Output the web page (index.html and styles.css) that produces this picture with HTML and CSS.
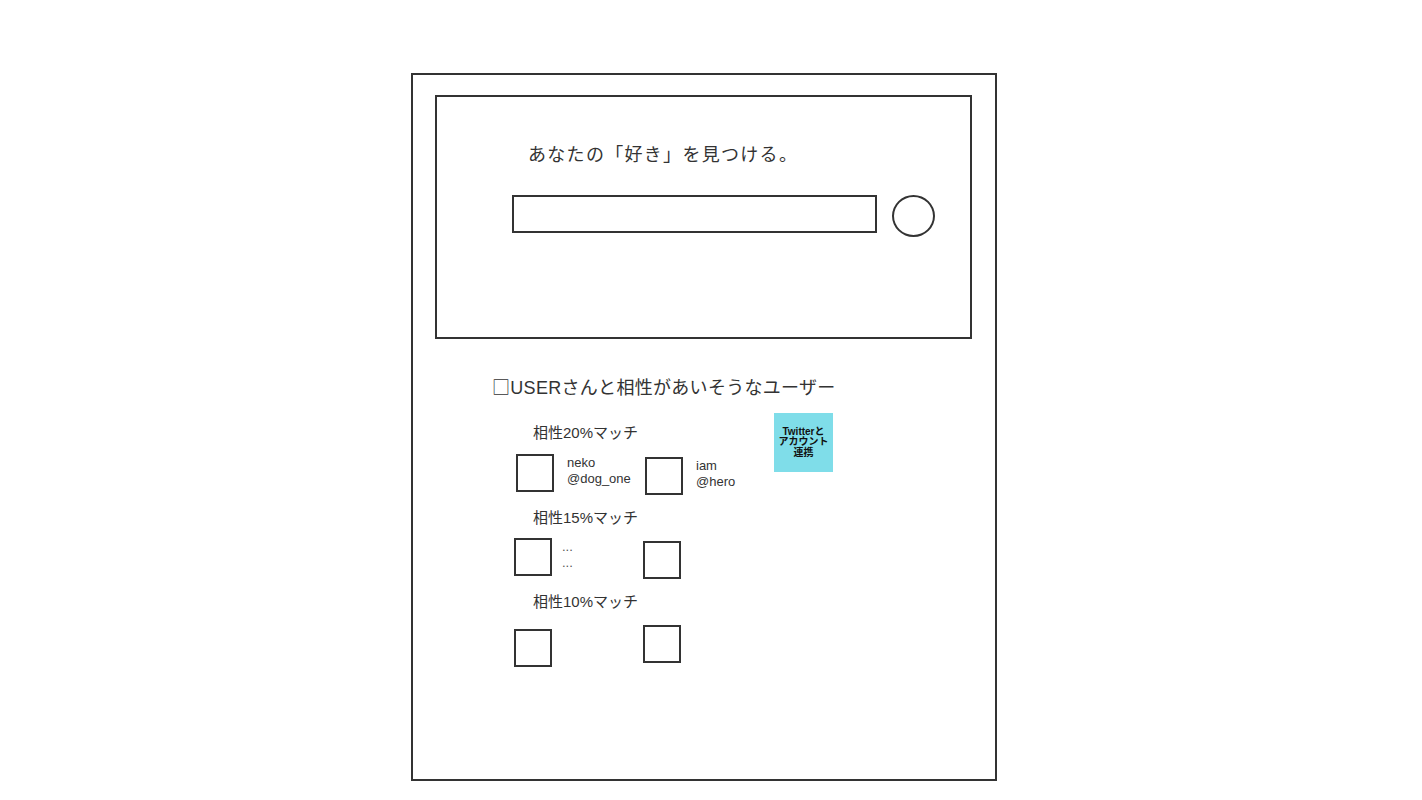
FILE: index.html
```html
<!DOCTYPE html>
<html lang="ja">

<head>
    <meta charset="UTF-8" />
    <meta name="viewport" content="width=device-width, initial-scale=1" />
    <title>好きを見つける</title>
    <link rel="stylesheet" href="styles.css">
</head>

<body>
    <div class="frame">
        <div class="hero">
            <h1 class="hero-title">あなたの「好き」を見つける。</h1>
            <form class="search">
                <input type="text" class="search-input" />
                <button type="submit" class="search-btn"></button>
            </form>
        </div>

        <h2 class="suggest-title"><span class="box-mark">□</span>USERさんと相性があいそうなユーザー</h2>

        <div class="suggest-body">
            <div class="matches">
                <div class="match-group">
                    <div class="match-label">相性20%マッチ</div>
                    <div class="user-row user-row--first">
                        <div class="user">
                            <div class="avatar"></div>
                            <div class="user-text">neko<br>@dog_one</div>
                        </div>
                        <div class="user user--low">
                            <div class="avatar"></div>
                            <div class="user-text">iam<br>@hero</div>
                        </div>
                    </div>
                </div>

                <div class="match-group">
                    <div class="match-label">相性15%マッチ</div>
                    <div class="user-row">
                        <div class="user">
                            <div class="avatar"></div>
                            <div class="user-text user-text--dots">...<br>...</div>
                        </div>
                        <div class="user user--low">
                            <div class="avatar"></div>
                        </div>
                    </div>
                </div>

                <div class="match-group">
                    <div class="match-label">相性10%マッチ</div>
                    <div class="user-row">
                        <div class="user user--lower">
                            <div class="avatar"></div>
                        </div>
                        <div class="user user--low">
                            <div class="avatar"></div>
                        </div>
                    </div>
                </div>
            </div>

            <button type="button" class="twitter-btn">Twitterと<br>アカウント<br>連携</button>
        </div>
    </div>
</body>

</html>
```

FILE: styles.css
```css
body {
    margin: 0;
    font-family: "Liberation Sans", "Noto Sans CJK JP", sans-serif;
    color: #333;
    background-color: #fff;
}

.frame {
    box-sizing: border-box;
    width: 586px;
    height: 708px;
    margin: 73px 0 0 411px;
    padding: 20px 0 0 22px;
    border: 2px solid #333;
}

.hero {
    box-sizing: border-box;
    width: 537px;
    height: 244px;
    padding-top: 46px;
    border: 2px solid #333;
}

.hero-title {
    margin: 0 0 0 91px;
    font-size: 18px;
    font-weight: normal;
    line-height: 24px;
    letter-spacing: 1.3px;
}

.search {
    display: flex;
    align-items: flex-start;
    margin: 28px 0 0 75px;
}

.search-input {
    box-sizing: border-box;
    width: 365px;
    height: 38px;
    margin: 0;
    border: 2px solid #333;
    border-radius: 0;
    outline: none;
}

.search-btn {
    box-sizing: border-box;
    width: 43px;
    height: 42px;
    margin-left: 15px;
    padding: 0;
    border: 2px solid #333;
    border-radius: 50%;
    background-color: #fff;
}

.suggest-title {
    margin: 35px 0 0 57px;
    font-size: 18px;
    font-weight: normal;
    line-height: 24px;
    letter-spacing: 0.3px;
}

.box-mark {
    font-family: "Noto Sans CJK JP", sans-serif;
}

.suggest-body {
    display: flex;
    align-items: flex-start;
    margin: 13px 0 0 79px;
}

.matches {
    width: 260px;
    padding-top: 10px;
}

.match-group+.match-group {
    margin-top: 13px;
}

.match-label {
    margin-left: 19px;
    font-size: 15px;
    line-height: 20px;
}

.user-row {
    display: grid;
    grid-template-columns: 129px 1fr;
    align-items: start;
    margin-top: 10px;
}

.user-row--first {
    margin-top: 11px;
    padding-left: 2px;
}

.user {
    display: flex;
    align-items: flex-start;
}

.user--low {
    margin-top: 3px;
}

.user--lower {
    margin-top: 7px;
}

.avatar {
    box-sizing: border-box;
    width: 38px;
    height: 38px;
    border: 2px solid #333;
}

.user-text {
    margin: 1px 0 0 13px;
    font-size: 13px;
    line-height: 16px;
}

.user-text--dots {
    margin-left: 10px;
    color: #555;
}

.twitter-btn {
    box-sizing: border-box;
    width: 59px;
    height: 59px;
    padding: 0;
    border: none;
    background-color: #7fdde9;
    color: #111;
    font-family: "Liberation Sans", "Noto Sans CJK JP", sans-serif;
    font-size: 10px;
    font-weight: bold;
    line-height: 10.5px;
    text-align: center;
}
```
